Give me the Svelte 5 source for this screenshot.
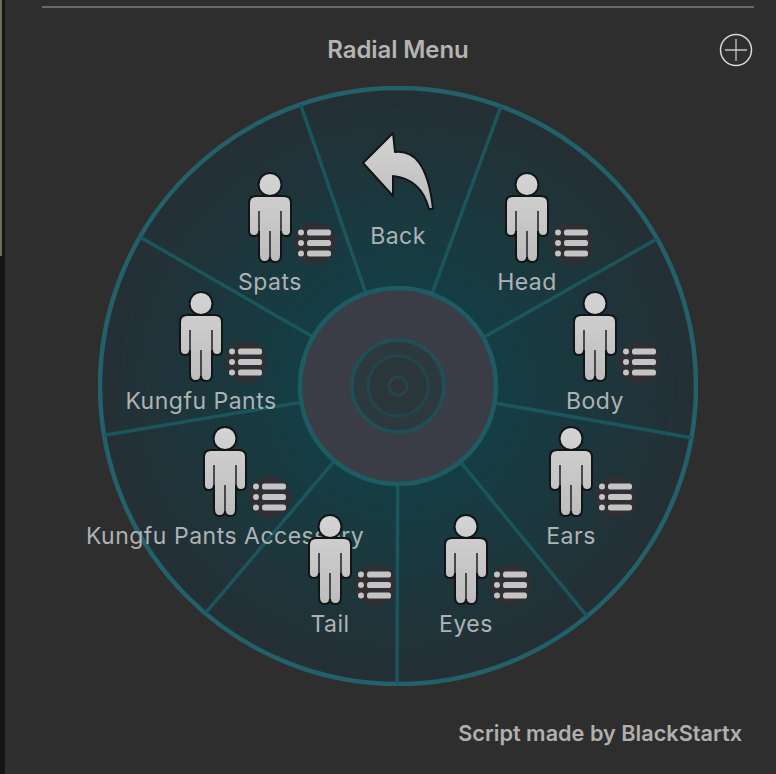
<script>
  const C = 300;
  const polar = (r, deg) => {
    const a = (deg * Math.PI) / 180;
    return [C + r * Math.sin(a), C - r * Math.cos(a)];
  };
  const spokes = [20.2, 60.4, 100, 140.6, 180.2, 220.3, 260.5, 300, 340.9].map((d) => {
    const [x1, y1] = polar(98, d);
    const [x2, y2] = polar(298, d);
    return { x1, y1, x2, y2 };
  });
  const bands = [130, 160, 190, 220, 250, 275];
  // x/top: person's centre and head top, relative to the wheel box
  const items = [
    { name: 'Spats', x: 172, top: 87 },
    { name: 'Head', x: 429, top: 87 },
    { name: 'Kungfu Pants', x: 103, top: 206 },
    { name: 'Body', x: 497, top: 206 },
    { name: 'Kungfu Pants Accessory', x: 127, top: 341 },
    { name: 'Ears', x: 473, top: 341 },
    { name: 'Tail', x: 232, top: 429 },
    { name: 'Eyes', x: 368, top: 429 }
  ];
</script>

<div class="page">
  <div class="edge"></div>
  <div class="panel">
    <div class="rule"></div>
    <header class="head">
      <h1>Radial Menu</h1>
      <button class="add" aria-label="Add">
        <svg viewBox="0 0 34 34" width="34" height="34">
          <circle cx="17" cy="17" r="15.5" fill="none" stroke="#d8d8d8" stroke-width="1.5" />
          <path d="M17 6V28M6 17H28" stroke="#c4c4c4" stroke-width="1.3" />
        </svg>
      </button>
    </header>

    <div class="wheel">
      <svg class="disc" viewBox="0 0 600 600" width="600" height="600">
        <defs>
          <radialGradient id="wash" gradientUnits="userSpaceOnUse" cx="300" cy="300" r="298">
            <stop offset="0.33" stop-color="#143e44" />
            <stop offset="0.6" stop-color="#1a383e" />
            <stop offset="1" stop-color="#252f35" />
          </radialGradient>
        </defs>
        <circle cx="300" cy="300" r="298" fill="url(#wash)" stroke="#22606a" stroke-width="4.5" />
        {#each bands as r}
          <circle cx="300" cy="300" {r} fill="none" stroke="#2a4a50" stroke-opacity="0.12" stroke-width="2" />
        {/each}
        {#each spokes as s}
          <line x1={s.x1} y1={s.y1} x2={s.x2} y2={s.y2} stroke="#1b565c" stroke-width="3.5" />
        {/each}
        <circle cx="300" cy="300" r="98" fill="#3a3d46" stroke="#1d5c63" stroke-width="4.5" />
        <circle cx="300" cy="300" r="46" fill="#2c393f" stroke="#1f5056" stroke-width="3.5" />
        <circle cx="300" cy="300" r="30" fill="#2b363b" stroke="#21474d" stroke-width="3" />
        <circle cx="300" cy="300" r="9" fill="#30343a" stroke="#21474d" stroke-width="3" />
      </svg>

      <div class="item back">
        <svg viewBox="0 0 72 80" width="72" height="80">
          <defs>
            <linearGradient id="metalB" x1="0" y1="0" x2="0" y2="1">
              <stop offset="0" stop-color="#d4d4d4" />
              <stop offset="1" stop-color="#bcbcbc" />
            </linearGradient>
          </defs>
          <path
            d="M1 31 L31 1 L33 20 C52 18 66 32 71 77 L67 77 C62 58 50 46 31 44 L31 64 Z"
            fill="url(#metalB)"
            stroke="#121416"
            stroke-width="2"
            stroke-linejoin="round"
          />
        </svg>
        <span class="label backlabel">Back</span>
      </div>

      {#each items as it}
        <div class="item" style="left:{it.x}px; top:{it.top}px">
          <svg class="person" viewBox="-23 -1 46 92" width="46" height="92">
            <defs>
              <linearGradient id="metal" gradientUnits="userSpaceOnUse" x1="0" y1="0" x2="0" y2="90">
                <stop offset="0" stop-color="#d4d4d4" />
                <stop offset="1" stop-color="#bcbcbc" />
              </linearGradient>
            </defs>
            <circle cx="0" cy="11.5" r="11.5" fill="url(#metal)" stroke="#121416" stroke-width="2" />
            <path
              d="M-14 23 H14 Q21 23 21 30 V58 Q21 63 16 63 Q11 63 11 58 V82 Q11 89 5.5 89 Q0 89 0 84 Q0 89 -5.5 89 Q-11 89 -11 82 V58 Q-11 63 -16 63 Q-21 63 -21 58 V30 Q-21 23 -14 23 Z"
              fill="url(#metal)"
              stroke="#121416"
              stroke-width="2"
            />
            <path d="M-11 38V60M11 38V60M0 58V86" stroke="#121416" stroke-width="1.4" fill="none" />
          </svg>
          <span class="badge">
            <svg viewBox="0 0 36 30" width="36" height="30">
              <g fill="#c4c4c4">
                <circle cx="4" cy="4.5" r="3" />
                <circle cx="4" cy="15" r="3" />
                <circle cx="4" cy="25.5" r="3" />
                <rect x="10" y="1.5" width="24" height="6" rx="2.6" />
                <rect x="10" y="12" width="24" height="6" rx="2.6" />
                <rect x="10" y="22.5" width="24" height="6" rx="2.6" />
              </g>
            </svg>
          </span>
          <span class="label">{it.name}</span>
        </div>
      {/each}
    </div>

    <footer class="foot">Script made by BlackStartx</footer>
  </div>
</div>

<style>
  :global(body) {
    margin: 0;
    background: #2e2e2e;
  }
  .page {
    display: flex;
    width: 776px;
    height: 774px;
    overflow: hidden;
    font-family: Inter, "Liberation Sans", sans-serif;
    background: #2e2e2e;
  }
  .edge {
    width: 5px;
    flex: none;
    background: linear-gradient(to right, #6b6b5c 0 2px, #141414 2px) top / 100% 256px no-repeat, #141414;
  }
  .panel {
    flex: 1;
    display: flex;
    flex-direction: column;
    min-width: 0;
  }
  .rule {
    height: 2px;
    margin: 6px 22px 0 37px;
    background: #6a6a6a;
  }
  .head {
    position: relative;
    height: 62px;
    margin-top: 10px;
    display: flex;
    align-items: center;
    justify-content: center;
    padding-left: 15px;
  }
  h1 {
    margin: 0;
    font-size: 24px;
    font-weight: 600;
    letter-spacing: -0.1px;
    color: #b4b4b4;
  }
  .add {
    position: absolute;
    right: 23px;
    top: 15px;
    width: 34px;
    height: 34px;
    padding: 0;
    border: 0;
    background: none;
    display: flex;
  }
  .wheel {
    position: relative;
    width: 600px;
    height: 600px;
    margin: 6px 0 0 93px;
  }
  .disc {
    position: absolute;
    inset: 0;
    display: block;
  }
  .item {
    position: absolute;
    width: 0;
    height: 0;
  }
  .person {
    position: absolute;
    left: -23px;
    top: -1px;
    display: block;
  }
  .badge {
    position: absolute;
    left: 24px;
    top: 49px;
    width: 42px;
    height: 42px;
    border-radius: 50%;
    background: #302f33;
    display: flex;
    align-items: center;
    justify-content: center;
  }
  .label {
    position: absolute;
    left: 0;
    top: 95px;
    transform: translateX(-50%);
    white-space: nowrap;
    font-size: 23px;
    line-height: 28px;
    letter-spacing: 0.5px;
    color: #adb3b5;
  }
  .back {
    left: 264px;
    top: 46px;
  }
  .back svg {
    display: block;
  }
  .backlabel {
    left: 36px;
    top: 90px;
  }
  .foot {
    margin: 34px 34px 0 0;
    text-align: right;
    font-size: 21.7px;
    font-weight: 600;
    color: #b0b0b0;
  }
</style>
